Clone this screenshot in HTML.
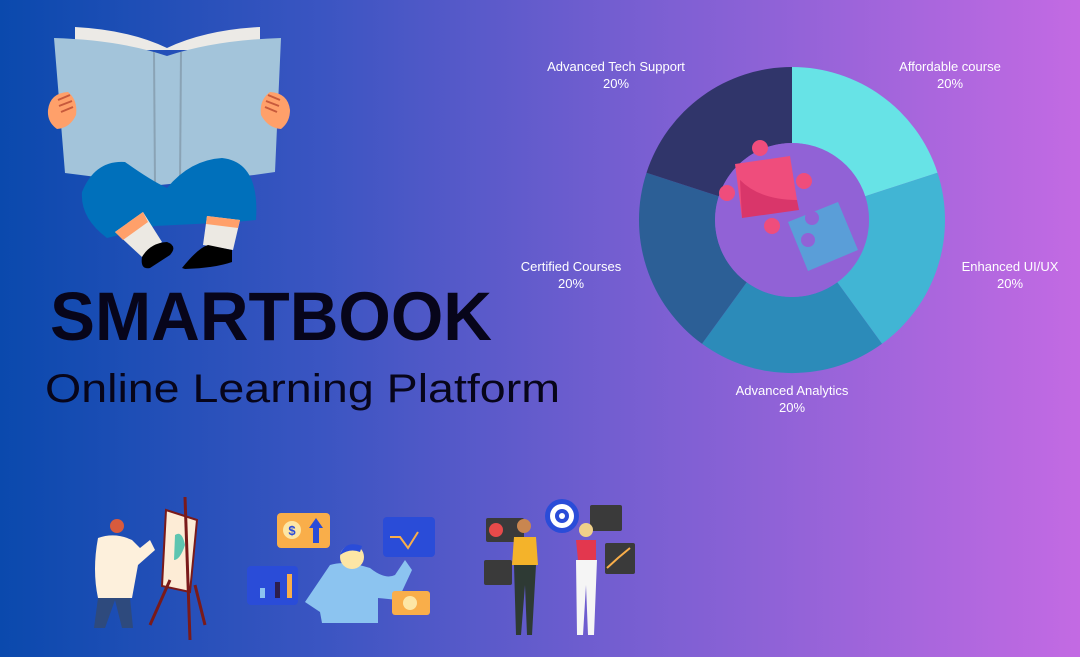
<!DOCTYPE html>
<html><head><meta charset="utf-8"><style>
html,body{margin:0;padding:0;width:1080px;height:657px;overflow:hidden}
body{background:linear-gradient(90deg,#0a49ad 0%,#3b55c2 30%,#7a5fd2 60%,#c36ae3 100%)}
svg{display:block}
</style></head><body>
<svg width="1080" height="657" viewBox="0 0 1080 657" xmlns="http://www.w3.org/2000/svg">
<path d="M75 27 Q130 30 167 48 Q205 30 260 27 L260 50 L75 50 Z" fill="#eceae6"/>
<path d="M54 38 Q120 40 167 56 Q215 40 281 38 L275 172 L254 175 L160 185 L65 173 Z" fill="#a3c4da"/>
<line x1="154" y1="52" x2="155" y2="185" stroke="#8aa3b5" stroke-width="2"/>
<line x1="181" y1="52" x2="180" y2="185" stroke="#8aa3b5" stroke-width="2"/>
<path d="M82 192 Q95 160 125 162 Q150 180 167 188 Q190 160 222 158 Q260 162 256 220 L235 222 L155 226 L107 238 Q80 218 82 192 Z" fill="#0070bb"/>
<path d="M115 232 L143 212 L162 242 L142 257 Z" fill="#ece9e3"/>
<path d="M115 232 L143 212 L148 222 L123 240 Z" fill="#ffa06a"/>
<path d="M207 216 L240 220 L233 250 L203 245 Z" fill="#ece9e3"/>
<path d="M207 216 L240 220 L238 228 L206 224 Z" fill="#ffa06a"/>
<path d="M142 257 Q150 243 167 242 Q178 246 170 255 L150 268 Q140 270 142 257 Z" fill="#000"/>
<path d="M182 268 Q198 248 208 245 L232 250 L232 262 Q215 268 185 269 Z" fill="#000"/>
<path d="M48 110 Q50 93 68 92 Q78 100 76 115 Q70 128 57 129 Q47 122 48 110Z" fill="#ffa06a"/>
<path d="M290 110 Q288 93 270 92 Q259 100 261 115 Q268 128 281 129 Q290 122 290 110Z" fill="#ffa06a"/>
<g stroke="#c75a3c" stroke-width="2" fill="none"><path d="M58 100 L70 95 M59 106 L72 101 M61 112 L73 107"/><path d="M280 100 L268 95 M279 106 L266 101 M277 112 L265 107"/></g>
<text x="50" y="340" font-family="Liberation Sans, sans-serif" font-weight="bold" font-size="69" fill="#07051a" textLength="442" lengthAdjust="spacingAndGlyphs">SMARTBOOK</text>
<text x="45" y="402" font-family="Liberation Sans, sans-serif" font-size="40" fill="#07051a" textLength="515" lengthAdjust="spacingAndGlyphs">Online Learning Platform</text>
<path d="M792 67 A153 153 0 0 1 937.5 172.7 L865.2 196.2 A77 77 0 0 0 792 143 Z" fill="#67e3e6"/>
<path d="M937.5 172.7 A153 153 0 0 1 882 343.8 L837.3 282.3 A77 77 0 0 0 865.2 196.2 Z" fill="#41b5d4"/>
<path d="M882 343.8 A153 153 0 0 1 702 343.8 L746.7 282.3 A77 77 0 0 0 837.3 282.3 Z" fill="#2c8bb9"/>
<path d="M702 343.8 A153 153 0 0 1 646.5 172.7 L718.8 196.2 A77 77 0 0 0 746.7 282.3 Z" fill="#2c5f96"/>
<path d="M646.5 172.7 A153 153 0 0 1 792 67 L792 143 A77 77 0 0 0 718.8 196.2 Z" fill="#30356a"/>
<circle cx="792" cy="220" r="77" fill="#9162d6"/>
<g fill="#ef4d7c"><path d="M735 164 L790 156 L797 200 L742 218 Z"/><circle cx="760" cy="148" r="8"/><circle cx="804" cy="181" r="8"/><circle cx="727" cy="193" r="8"/><circle cx="772" cy="226" r="8"/></g>
<path d="M740 180 Q760 200 797 200 L799 210 L742 218 Z" fill="#d9366a"/>
<path d="M788 222 L838 202 L858 250 L808 271 Z" fill="#5a9ed8"/>
<circle cx="812" cy="218" r="7" fill="#9162d6"/><circle cx="808" cy="240" r="7" fill="#9162d6"/>
<g font-family="Liberation Sans, sans-serif" font-size="13" fill="#fff" text-anchor="middle">
<text x="616" y="71">Advanced Tech Support</text><text x="616" y="88">20%</text>
<text x="950" y="71">Affordable course</text><text x="950" y="88">20%</text>
<text x="571" y="271">Certified Courses</text><text x="571" y="288">20%</text>
<text x="1010" y="271">Enhanced UI/UX</text><text x="1010" y="288">20%</text>
<text x="792" y="395">Advanced Analytics</text><text x="792" y="412">20%</text>
</g>
<path d="M166 510 L197 520 L190 592 L162 586 Z" fill="#fdecd6" stroke="#7a1a1a" stroke-width="2"/>
<path d="M175 535 Q182 530 185 545 Q180 560 174 560 Z" fill="#5ec5b0"/>
<g stroke="#7a1a1a" stroke-width="3"><line x1="185" y1="497" x2="190" y2="640"/><line x1="170" y1="580" x2="150" y2="625"/><line x1="195" y1="585" x2="205" y2="625"/></g>
<circle cx="117" cy="526" r="7" fill="#d85b3d"/>
<path d="M98 538 Q115 532 132 540 L140 548 L150 540 L155 550 L138 565 L132 598 L98 598 Q92 570 98 538Z" fill="#fdf0dc"/>
<path d="M98 598 L94 628 L105 628 L115 600 L122 628 L133 628 L130 598 Z" fill="#2e4a7d"/>
<rect x="277" y="513" width="53" height="35" rx="4" fill="#f9ae4a"/>
<circle cx="292" cy="530" r="9" fill="#fde6a5"/>
<text x="292" y="535" font-family="Liberation Sans,sans-serif" font-size="13" font-weight="bold" fill="#2a4cd8" text-anchor="middle">$</text>
<path d="M316 518 L323 528 L319 528 L319 543 L313 543 L313 528 L309 528 Z" fill="#2a4cd8"/>
<rect x="383" y="517" width="52" height="40" rx="4" fill="#2a4cd8"/>
<path d="M390 537 L400 537 L408 548 L418 532" stroke="#f9ae4a" stroke-width="2" fill="none"/>
<rect x="247" y="566" width="51" height="39" rx="4" fill="#2a4cd8"/>
<rect x="260" y="588" width="5" height="10" fill="#8cc4f0"/><rect x="275" y="582" width="5" height="16" fill="#2d1e4b"/><rect x="287" y="574" width="5" height="24" fill="#f9ae4a"/>
<path d="M305 602 L330 565 Q345 560 370 568 Q385 580 395 575 L405 560 L412 570 L398 600 L378 598 L378 623 L322 623 L320 612 Z" fill="#8cc4f0"/>
<circle cx="352" cy="557" r="12" fill="#fde6a5"/><path d="M340 555 Q345 540 362 546 L360 552 Q350 548 340 555Z" fill="#2a4cd8"/>
<rect x="392" y="591" width="38" height="24" rx="3" fill="#f9ae4a"/><circle cx="410" cy="603" r="7" fill="#fde6a5"/>
<rect x="486" y="518" width="38" height="24" rx="2" fill="#3a3a3a"/><circle cx="496" cy="530" r="7" fill="#e74a4a"/>
<rect x="484" y="560" width="28" height="25" rx="2" fill="#3a3a3a"/>
<rect x="590" y="505" width="32" height="26" rx="2" fill="#3a3a3a"/>
<rect x="605" y="543" width="30" height="31" rx="2" fill="#3a3a3a"/><path d="M607 568 L618 558 L630 548" stroke="#f9ae4a" stroke-width="2" fill="none"/>
<circle cx="562" cy="516" r="17" fill="#2a4cd8"/><circle cx="562" cy="516" r="12" fill="#fff"/><circle cx="562" cy="516" r="7" fill="#2a4cd8"/><circle cx="562" cy="516" r="3" fill="#fff"/>
<circle cx="524" cy="526" r="7" fill="#c98650"/>
<path d="M514 537 L536 537 L538 565 L512 565 Z" fill="#f4b32a"/>
<path d="M514 565 L536 565 L532 635 L527 635 L525 585 L521 635 L516 635 Z" fill="#2e3a34"/>
<circle cx="586" cy="530" r="7" fill="#f0d08a"/>
<path d="M576 540 L596 540 L596 560 L578 560 Z" fill="#e3374e"/>
<path d="M576 560 L597 560 L594 635 L588 635 L586 585 L583 635 L577 635 Z" fill="#f5f5f5"/>
</svg>
</body></html>
